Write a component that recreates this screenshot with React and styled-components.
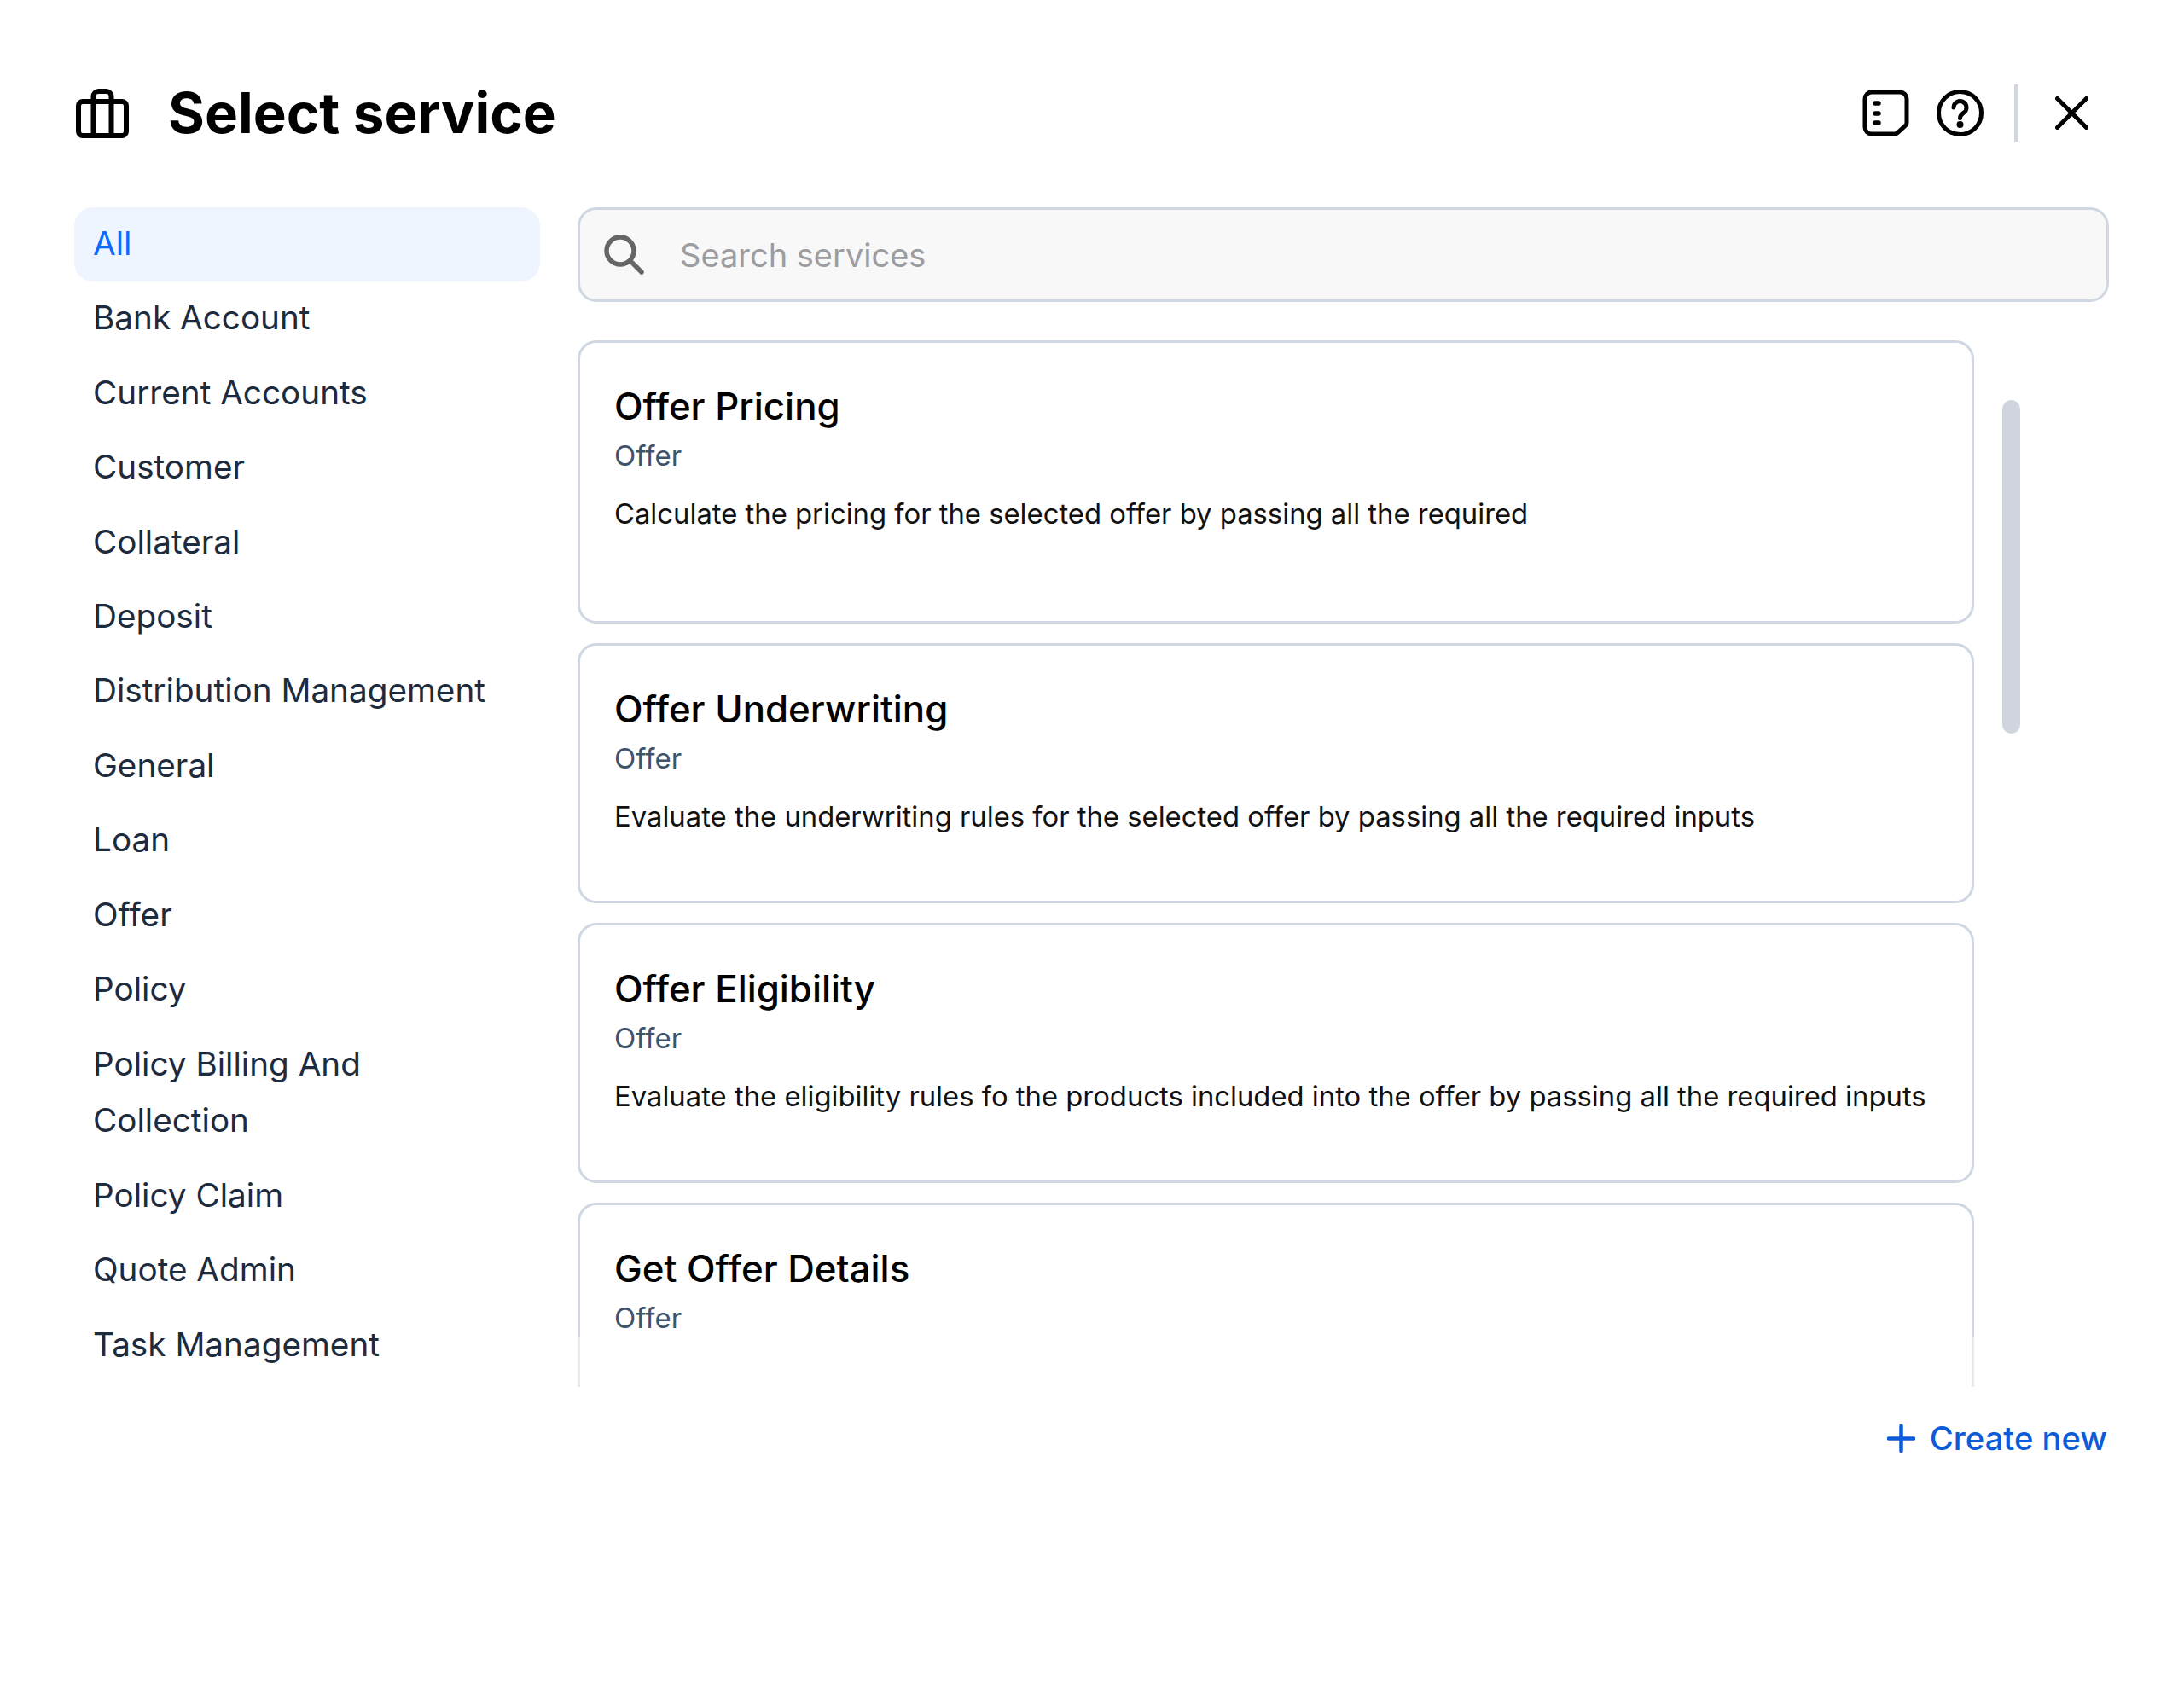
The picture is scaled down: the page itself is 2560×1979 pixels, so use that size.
import React from 'react';
import styled, { createGlobalStyle } from 'styled-components';

const GlobalStyle = createGlobalStyle`
  html, body {
    margin: 0;
    background: #fff;
  }
  body {
    font-family: Inter, "Liberation Sans", sans-serif;
  }
`;

const Page = styled.div`
  width: 2560px;
  height: 1979px;
  box-sizing: border-box;
  padding: 99px 88px 0 87px;
  display: flex;
  flex-direction: column;
`;

const Header = styled.header`
  display: flex;
  align-items: center;
  height: 67px;
  padding-left: 2px;
  margin-bottom: 77px;
`;

const Title = styled.h1`
  margin: 0 0 0 46px;
  font-size: 65.5px;
  font-weight: 700;
  line-height: 67px;
  color: #000;
  flex: 1;
`;

const HeaderActions = styled.div`
  display: flex;
  align-items: center;
  gap: 32px;
  margin-right: 24px;
`;

const Divider = styled.div`
  width: 5px;
  height: 67px;
  margin: 0 11px 0 4px;
  background: #d0d7e2;
`;

const Body = styled.div`
  display: flex;
  gap: 44px;
`;

const Sidebar = styled.nav`
  width: 546px;
  flex-shrink: 0;
  display: flex;
  flex-direction: column;
`;

const NavItem = styled.div`
  padding: ${props => (props.$wrapped ? '11px 22px 12.5px' : '10px 22px 12px')};
  font-size: 38.7px;
  line-height: 65.4px;
  border-radius: 22px;
  color: ${props => (props.$active ? '#0a6cff' : '#1d2b3e')};
  background: ${props => (props.$active ? '#eef5fe' : 'transparent')};
`;

const Main = styled.div`
  flex: 1;
  min-width: 0;
`;

const SearchBox = styled.div`
  height: 111px;
  box-sizing: border-box;
  display: flex;
  align-items: center;
  gap: 42px;
  padding-left: 28px;
  background: #f8f8f9;
  border: 3px solid #cfd7e2;
  border-radius: 22px;
  margin-bottom: 45px;
`;

const Placeholder = styled.span`
  font-size: 38px;
  color: #9b9da0;
`;

const ListViewport = styled.div`
  position: relative;
  height: 1227px;
  overflow: hidden;
`;

const CardList = styled.div`
  width: 1637px;
  display: flex;
  flex-direction: column;
  gap: 23px;
`;

const Card = styled.article`
  flex-shrink: 0;
  box-sizing: border-box;
  height: ${props => props.$height}px;
  padding: 45px 30px 0 40px;
  border: 3px solid #cfd7e2;
  border-radius: 22px;
`;

const CardTitle = styled.div`
  font-size: 43.8px;
  font-weight: 500;
  line-height: 60px;
  color: #000;
`;

const CardCategory = styled.div`
  margin-top: 1px;
  font-size: 33px;
  line-height: 52px;
  color: #3f536b;
`;

const CardText = styled.div`
  margin-top: 16px;
  font-size: 32.8px;
  line-height: 52px;
  color: #111;
`;

const Scrollbar = styled.div`
  position: absolute;
  top: 70px;
  left: 1670px;
  width: 21px;
  height: 391px;
  border-radius: 11px;
  background: #d0d5dd;
`;

const FadeEdge = styled.div`
  position: absolute;
  left: 0;
  right: 0;
  bottom: 0;
  height: 58px;
  background: rgba(255, 255, 255, 0.5);
`;

const Footer = styled.div`
  display: flex;
  justify-content: flex-end;
  margin-top: 34px;
  padding-right: 2px;
`;

const CreateButton = styled.button`
  display: flex;
  align-items: center;
  gap: 17px;
  padding: 0;
  border: none;
  background: none;
  font-family: inherit;
  font-size: 38.2px;
  font-weight: 500;
  line-height: 52px;
  color: #0b5cdb;
`;

const categories = [
  { name: 'Bank Account' },
  { name: 'Current Accounts' },
  { name: 'Customer' },
  { name: 'Collateral' },
  { name: 'Deposit' },
  { name: 'Distribution Management' },
  { name: 'General' },
  { name: 'Loan' },
  { name: 'Offer' },
  { name: 'Policy' },
  { name: 'Policy Billing And Collection', wrapped: true },
  { name: 'Policy Claim' },
  { name: 'Quote Admin' },
  { name: 'Task Management' },
];

const services = [
  {
    title: 'Offer Pricing',
    text: 'Calculate the pricing for the selected offer by passing all the required',
    height: 332,
  },
  {
    title: 'Offer Underwriting',
    text: 'Evaluate the underwriting rules for the selected offer by passing all the required inputs',
    height: 305,
  },
  {
    title: 'Offer Eligibility',
    text: 'Evaluate the eligibility rules fo the products included into the offer by passing all the required inputs',
    height: 305,
  },
  {
    title: 'Get Offer Details',
    height: 305,
  },
];

const BriefcaseIcon = () => (
  <svg width="62" height="58" viewBox="0 0 62 58" fill="none" stroke="#000" strokeWidth="6" strokeLinejoin="round">
    <rect x="3" y="15" width="56" height="40" rx="5" />
    <path d="M20.5 55V9a6 6 0 0 1 6-6h9a6 6 0 0 1 6 6v46" />
  </svg>
);

const NotesIcon = () => (
  <svg width="55" height="55" viewBox="0 0 55 55" fill="none" stroke="#000" strokeWidth="5" strokeLinecap="round" strokeLinejoin="round">
    <path d="M11 3h33a8 8 0 0 1 8 8v28a4 4 0 0 1-1.2 2.8L41 50.8a4 4 0 0 1-2.8 1.2H11a8 8 0 0 1-8-8V11a8 8 0 0 1 8-8z" />
    <path d="M15 16h4M15 28h4M15 39h4" strokeWidth="5.5" />
  </svg>
);

const HelpIcon = () => (
  <svg width="55" height="55" viewBox="0 0 55 55" fill="none" stroke="#000" strokeWidth="5" strokeLinecap="round" strokeLinejoin="round">
    <circle cx="27.5" cy="27.5" r="25" />
    <path d="M20 21a7.5 7.5 0 1 1 11.5 6.4c-2.5 1.6-4 3-4 6.1" />
    <circle cx="27.5" cy="41" r="1.5" fill="#000" />
  </svg>
);

const CloseIcon = () => (
  <svg width="39" height="39" viewBox="0 0 39 39" fill="none" stroke="#000" strokeWidth="5" strokeLinecap="round">
    <path d="M2.5 2.5l34 34M36.5 2.5l-34 34" />
  </svg>
);

const SearchIcon = () => (
  <svg width="47" height="47" viewBox="0 0 47 47" fill="none" stroke="#666" strokeWidth="5.5" strokeLinecap="round">
    <circle cx="19" cy="19" r="16" />
    <path d="M31 31l13 13" />
  </svg>
);

const PlusIcon = () => (
  <svg width="33" height="33" viewBox="0 0 33 33" fill="none" stroke="#0b5cdb" strokeWidth="4.5" strokeLinecap="round">
    <path d="M16.5 2v29M2 16.5h29" />
  </svg>
);

const App = () => (
  <>
    <GlobalStyle />
    <Page>
      <Header>
        <BriefcaseIcon />
        <Title>Select service</Title>
        <HeaderActions>
          <NotesIcon />
          <HelpIcon />
          <Divider />
          <CloseIcon />
        </HeaderActions>
      </Header>
      <Body>
        <Sidebar>
          <NavItem $active>All</NavItem>
          {categories.map(category => (
            <NavItem key={category.name} $wrapped={category.wrapped}>{category.name}</NavItem>
          ))}
        </Sidebar>
        <Main>
          <SearchBox>
            <SearchIcon />
            <Placeholder>Search services</Placeholder>
          </SearchBox>
          <ListViewport>
            <CardList>
              {services.map(service => (
                <Card key={service.title} $height={service.height}>
                  <CardTitle>{service.title}</CardTitle>
                  <CardCategory>Offer</CardCategory>
                  {service.text && <CardText>{service.text}</CardText>}
                </Card>
              ))}
            </CardList>
            <Scrollbar />
            <FadeEdge />
          </ListViewport>
          <Footer>
            <CreateButton><PlusIcon /> Create new</CreateButton>
          </Footer>
        </Main>
      </Body>
    </Page>
  </>
);

export default App;
